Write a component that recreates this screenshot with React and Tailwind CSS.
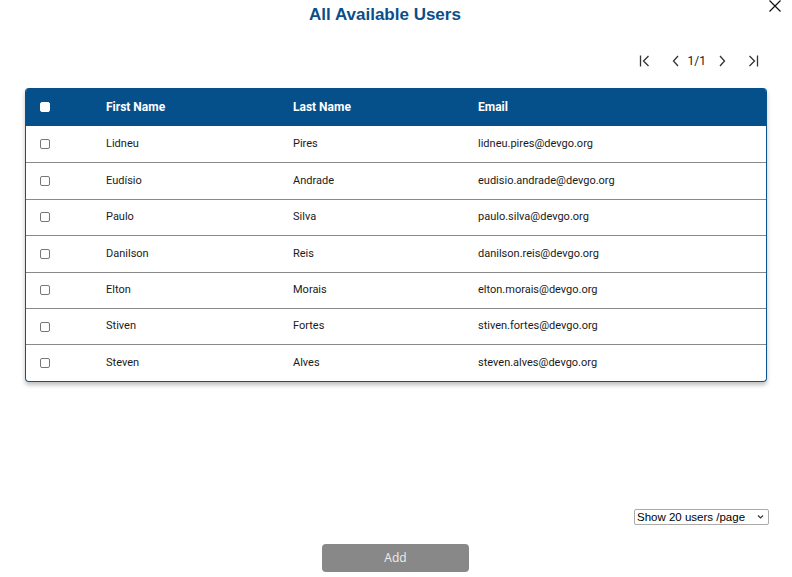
const users = [
  { first: 'Lidneu', last: 'Pires', email: 'lidneu.pires@devgo.org' },
  { first: 'Eudísio', last: 'Andrade', email: 'eudisio.andrade@devgo.org' },
  { first: 'Paulo', last: 'Silva', email: 'paulo.silva@devgo.org' },
  { first: 'Danilson', last: 'Reis', email: 'danilson.reis@devgo.org' },
  { first: 'Elton', last: 'Morais', email: 'elton.morais@devgo.org' },
  { first: 'Stiven', last: 'Fortes', email: 'stiven.fortes@devgo.org' },
  { first: 'Steven', last: 'Alves', email: 'steven.alves@devgo.org' },
]

function Box({ header }) {
  return (
    <span
      className={`block w-[10px] h-[10px] rounded-[2px] border ${header ? 'bg-white border-white' : 'bg-white border-[#777]'}`}
    />
  )
}

function FirstIcon() {
  return (
    <svg width="14" height="14" viewBox="0 0 14 14" fill="none" stroke="#333" strokeWidth="1.3">
      <path d="M2.5 1.5v11" />
      <path d="M10.5 2 5.5 7l5 5" />
    </svg>
  )
}

function LastIcon() {
  return (
    <svg width="14" height="14" viewBox="0 0 14 14" fill="none" stroke="#333" strokeWidth="1.3">
      <path d="M11.5 1.5v11" />
      <path d="M3.5 2 8.5 7l-5 5" />
    </svg>
  )
}

function Prev() {
  return (
    <svg width="12" height="14" viewBox="0 0 12 14" fill="none" stroke="#333" strokeWidth="1.3">
      <path d="M8 2 3.5 7 8 12" />
    </svg>
  )
}

function Next() {
  return (
    <svg width="12" height="14" viewBox="0 0 12 14" fill="none" stroke="#333" strokeWidth="1.3">
      <path d="M4 2 8.5 7 4 12" />
    </svg>
  )
}

export default function App() {
  return (
    <div className="relative w-[792px] h-[577px] bg-white font-['Roboto',sans-serif] text-[#1a1a1a] overflow-hidden">
      {/* Cerrar */}
      <button className="absolute right-[10px] top-[-1px] text-black">
        <svg width="14" height="14" viewBox="0 0 14 14" fill="none" stroke="#111" strokeWidth="1.2">
          <path d="M1.5 1.5 12.5 12.5M12.5 1.5 1.5 12.5" />
        </svg>
      </button>

      <h1 className="pt-[4px] text-center text-[17px] leading-[22px] font-bold text-[#0a4f8b] font-['Liberation_Sans',sans-serif]">
        <span className="relative left-[-11px]">All Available Users</span>
      </h1>

      {/* Paginación */}
      <div className="flex items-center justify-end pr-[32px] mt-[24px] h-[22px] text-[12px]">
        <span className="mr-[18px]"><FirstIcon /></span>
        <span className="mr-[4px]"><Prev /></span>
        <span className="mx-[2px]">1/1</span>
        <span className="ml-[8px] mr-[18px]"><Next /></span>
        <span><LastIcon /></span>
      </div>

      {/* Tabla */}
      <div className="ml-[25px] mt-[16px] w-[742px] rounded-[4px] border-x-[1.5px] border-b-[1.5px] border-[#0d5391] shadow-[0_3px_4px_rgba(0,0,0,0.25)] overflow-hidden">
        <div className="grid grid-cols-[80px_187px_185px_1fr] items-center h-[38px] bg-[#05508b] text-white text-[12px] font-bold">
          <div className="pl-[14px]"><Box header /></div>
          <div>First Name</div>
          <div>Last Name</div>
          <div>Email</div>
        </div>
        {users.map((u, i) => (
          <div
            key={u.email}
            className={`grid grid-cols-[80px_187px_185px_1fr] items-center h-[36.4px] text-[11px] ${i > 0 ? 'border-t border-[#8a8a8a]' : ''}`}
          >
            <div className="pl-[14px]"><Box /></div>
            <div>{u.first}</div>
            <div>{u.last}</div>
            <div>{u.email}</div>
          </div>
        ))}
      </div>

      {/* Pie */}
      <div className="absolute left-[634px] top-[509px] w-[135px] h-[16px]">
        <select className="block appearance-none w-full h-full border border-[#aaa] rounded-[2px] text-[11.5px] leading-[14px] py-0 pl-[2px] font-['Liberation_Sans',sans-serif] text-black bg-white">
          <option>Show 20 users /page</option>
        </select>
        <svg className="absolute right-[5px] top-[5px] pointer-events-none" width="7" height="6" viewBox="0 0 7 6" fill="none" stroke="#333" strokeWidth="1.2">
          <path d="M1 1.5 3.5 4 6 1.5" />
        </svg>
      </div>
      <div className="absolute left-[322px] top-[544px]">
        <button className="w-[147px] h-[28px] rounded-[4px] bg-[#888] text-[#eee] text-[12px] font-['Open_Sans',sans-serif]">
          Add
        </button>
      </div>
    </div>
  )
}
